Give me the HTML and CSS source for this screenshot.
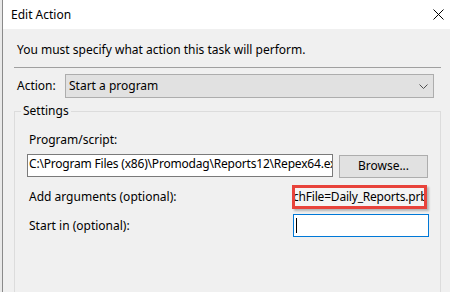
FILE: index.html
```html
<!DOCTYPE html>
<html>
<head>
<meta charset="utf-8">
<link rel="stylesheet" href="styles.css">
</head>
<body>
<div class="window">
  <div class="titlebar">
    <span class="title">Edit Action</span>
    <svg class="close" width="11" height="11" viewBox="0 0 11 11"><path d="M0.5 0.5 L10.5 10.5 M10.5 0.5 L0.5 10.5" stroke="#000" stroke-width="1" fill="none"/></svg>
  </div>
  <div class="content">
    <p class="intro">You must specify what action this task will perform.</p>
    <div class="sep"></div>
    <div class="action-row">
      <span class="action-label">Action:</span>
      <div class="combo">
        <span class="combo-text">Start a program</span>
        <svg class="chevron" width="9" height="5" viewBox="0 0 9 5"><polyline points="0.5,0.5 4.5,4.5 8.5,0.5" stroke="#505050" stroke-width="1" fill="none"/></svg>
      </div>
    </div>
    <fieldset class="group">
      <legend class="legend">Settings</legend>
      <div class="group-body">
        <div class="field-label prog-label">Program/script:</div>
        <div class="prog-row">
          <div class="textbox prog-box">C:\Program Files (x86)\Promodag\Reports12\Repex64.exe</div>
          <div class="button">Browse...</div>
        </div>
        <div class="opt-row args-row">
          <span class="field-label">Add arguments (optional):</span>
          <div class="textbox args-box"><span class="args-text">chFile=Daily_Reports.prb</span></div>
        </div>
        <div class="opt-row start-row">
          <span class="field-label">Start in (optional):</span>
          <div class="textbox start-box"><span class="caret"></span></div>
        </div>
      </div>
    </fieldset>
  </div>
</div>
</body>
</html>
```
FILE: styles.css
```css
* { box-sizing: border-box; }
html, body {
  margin: 0;
  padding: 0;
  width: 450px;
  height: 292px;
  overflow: hidden;
  background: #e9e9e9;
}
body {
  font-family: "Noto Sans", "Open Sans", sans-serif;
  font-size: 12px;
  line-height: 16px;
  color: #000;
}
.window {
  margin-left: 2px;
  height: 292px;
  border-left: 1px solid #8a8a8a;
  background: #f0f0f0;
}
.titlebar {
  height: 29px;
  background: #fff;
  display: flex;
  align-items: center;
  padding-left: 8px;
}
.title { line-height: 16px; }
.close { margin-left: auto; margin-right: 6px; display: block; }
.content {
  padding: 0 9px 0 11px;
}
.intro {
  margin: 13px 0 0 3px;
  white-space: nowrap;
}
.sep {
  margin-top: 9px;
  height: 1px;
  background: #a0a0a0;
}
.action-row {
  display: flex;
  align-items: center;
  margin-top: 6px;
}
.action-label {
  width: 48px;
  margin-left: 3px;
}
.combo {
  width: 369px;
  height: 24px;
  border: 1px solid #adadad;
  background: #e1e1e1;
  display: flex;
  align-items: center;
  padding-left: 3px;
  padding-right: 5px;
}
.combo-text { flex: 1; }
.chevron { display: block; }
.group {
  margin: 5px 0 0 0;
  padding: 0 0 0 6px;
  border: 1px solid #dcdcdc;
  min-width: 0;
  height: 200px;
}
.legend {
  padding: 0 2px;
  line-height: 16px;
}
.group-body {
  padding: 0 12px 0 6px;
}
.field-label {
  margin-left: 2px;
  white-space: nowrap;
}
.prog-label { margin-top: 13px; }
.prog-row {
  display: flex;
  align-items: flex-start;
  margin-top: 6px;
}
.textbox {
  background: #fff;
  white-space: nowrap;
  overflow: hidden;
}
.prog-box {
  width: 306px;
  height: 23px;
  border: 1px solid #7a7a7a;
  padding: 0 2px 4px 1px;
  line-height: 17px;
  letter-spacing: -0.2px;
}
.button {
  margin-left: auto;
  margin-top: 1px;
  width: 89px;
  height: 23px;
  border: 1px solid #adadad;
  background: #e1e1e1;
  text-align: center;
  line-height: 19px;
}
.opt-row {
  display: flex;
  align-items: center;
  justify-content: space-between;
}
.args-row { margin-top: 7px; }
.start-row { margin-top: 5px; }
.args-box {
  width: 135px;
  height: 24px;
  margin-right: 1px;
  border: 3px solid #e8433b;
  background: #f4f4f4;
  box-shadow: 2px 2px 2px rgba(0, 0, 0, 0.25);
  line-height: 17px;
}
.args-text {
  display: block;
  text-indent: -2px;
  letter-spacing: -0.2px;
}
.start-box {
  width: 136px;
  height: 23px;
  margin-right: -1px;
  border: 1px solid #0078d7;
  padding: 3px 0 0 2px;
}
.caret {
  display: block;
  width: 1px;
  height: 15px;
  background: #000;
}
```
